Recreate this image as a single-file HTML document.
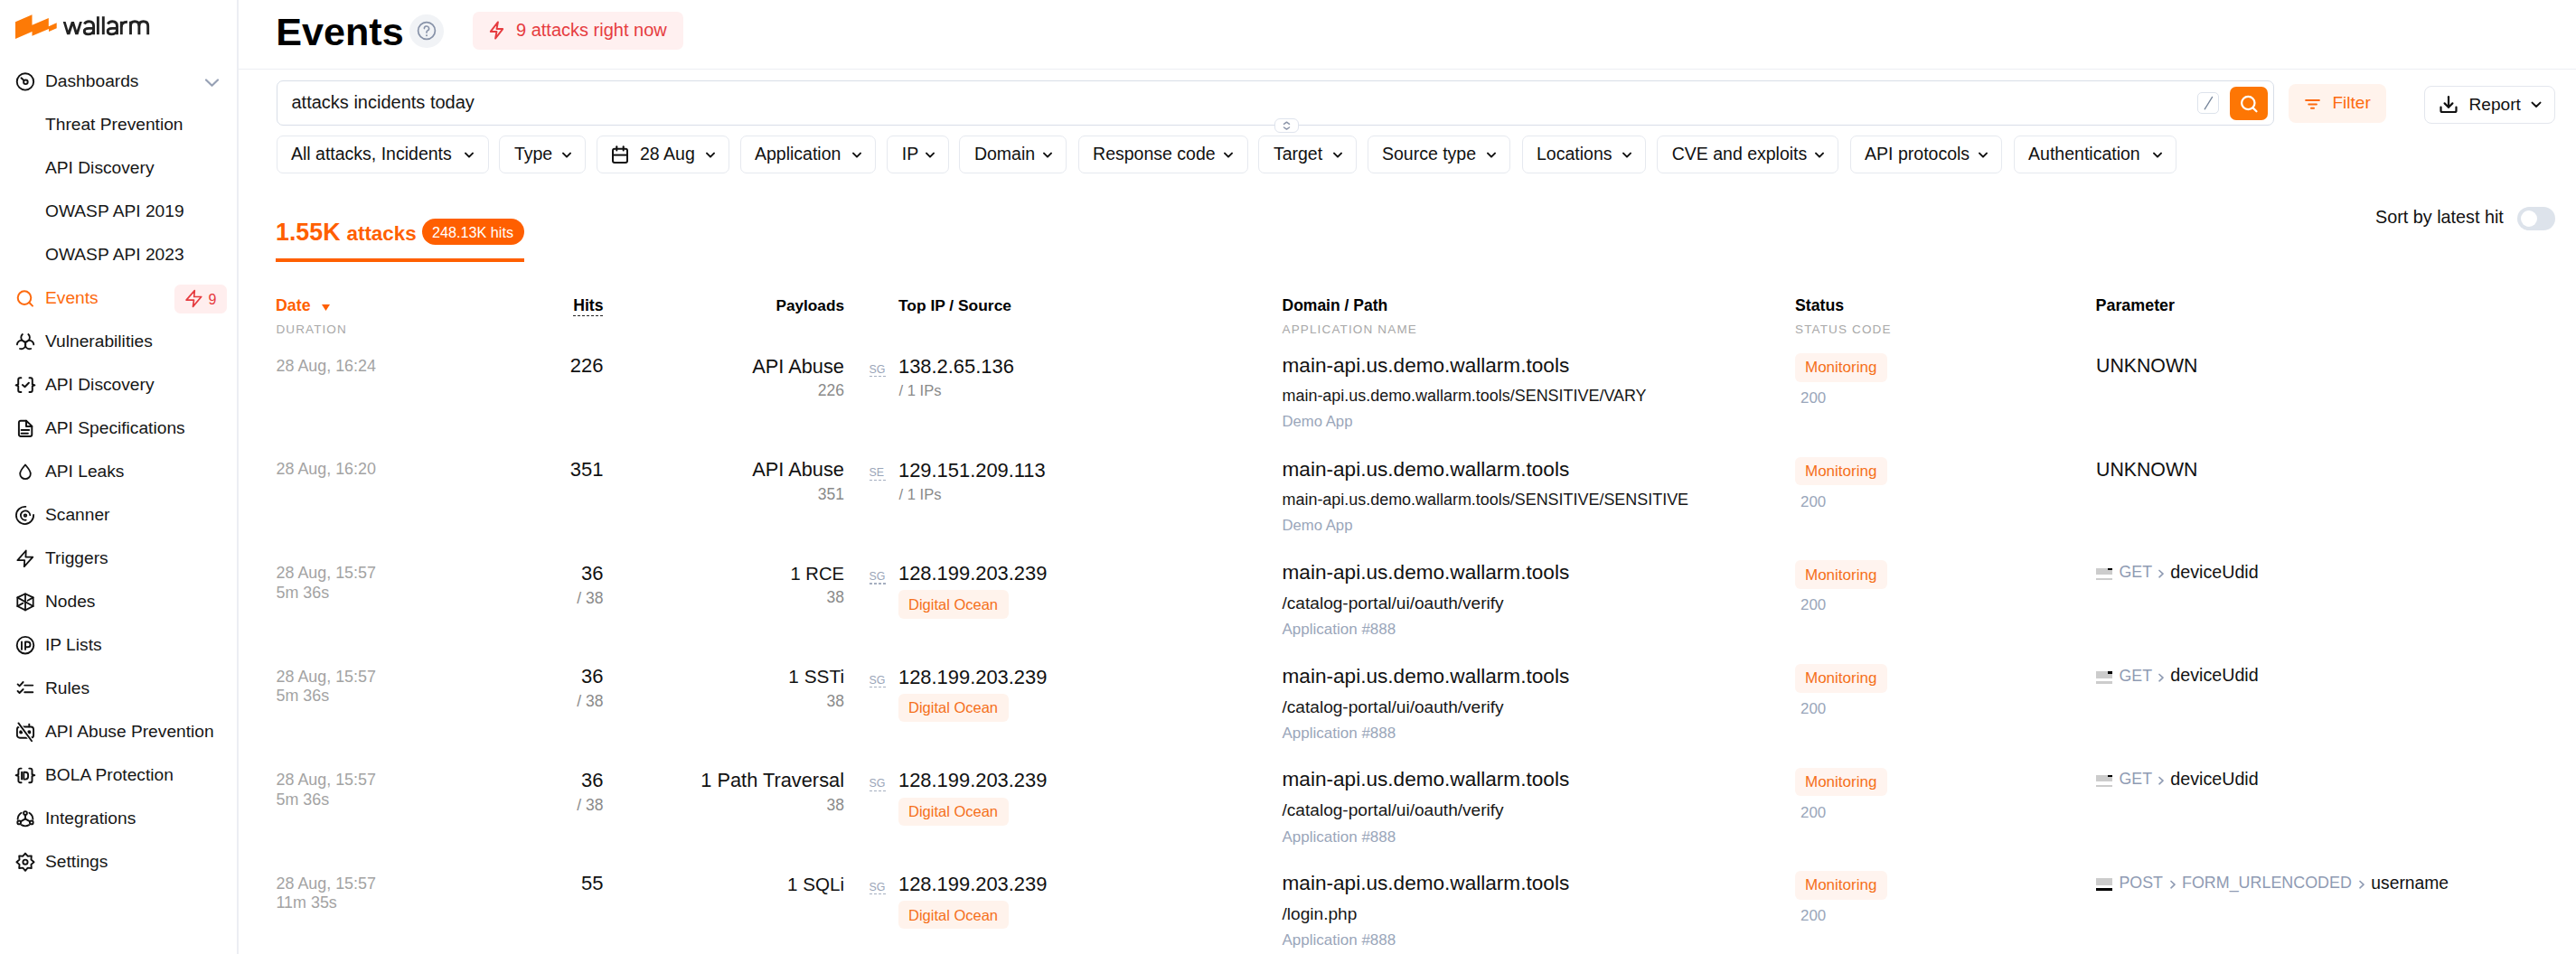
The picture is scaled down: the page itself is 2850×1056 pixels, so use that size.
<!DOCTYPE html>
<html><head><meta charset="utf-8"><title>Events</title>
<style>
html,body{margin:0;padding:0;background:#fff;}
body{width:2850px;height:1056px;position:relative;overflow:hidden;font-family:"Liberation Sans", sans-serif;}
.t{position:absolute;white-space:nowrap;line-height:1;}
.b{position:absolute;}
</style></head><body>
<div class="b" style="left:262.00px;top:0.00px;width:1.50px;height:1056.00px;background:#eceef3"></div>
<svg class="b" style="left:0.00px;top:0.00px;" width="80" height="50" viewBox="0 0 80 50" fill="none"><polygon fill="#fd7a06" points="17,24.3 35.5,16.2 35.5,27.8 53.8,19.9 53.8,29.2 62.7,25.2 62.7,31.2 54,35 54,32 35.5,39.7 35.5,35 17,43.1"/></svg>
<svg class="b" style="left:0.00px;top:0.00px;" width="180" height="50" viewBox="0 0 180 50" fill="none"><g stroke="#222" stroke-width="2.9" fill="none" stroke-linejoin="miter"><polygon fill="#222" stroke="none" points="69.7,24 72.6,24 75.5,33.8 78.9,24 81.9,24 84.9,33.8 88.1,24 90.9,24 86.5,38.2 83.3,38.2 80.4,28.8 77.3,38.2 74.1,38.2"/><path d="M93.40 26.6 C94.40 24.6 96.20 23.7 98.40 23.7 C101.90 23.7 103.60 25.6 103.60 28.8 V38.2"/><path d="M103.60 31.4 H98.20 C95.00 31.4 93.30 32.6 93.30 34.6 C93.30 36.6 95.00 37.9 97.40 37.9 C100.60 37.9 103.60 36 103.60 33"/><path d="M108.4 18.2 V38.2"/><path d="M114.3 18.2 V38.2"/><path d="M119.30 26.6 C120.30 24.6 122.10 23.7 124.30 23.7 C127.80 23.7 129.50 25.6 129.50 28.8 V38.2"/><path d="M129.50 31.4 H124.10 C120.90 31.4 119.20 32.6 119.20 34.6 C119.20 36.6 120.90 37.9 123.30 37.9 C126.50 37.9 129.50 36 129.50 33"/><path d="M134.3 38.2 V23.7"/><path d="M134.3 29.8 C134.3 26 136.6 24.2 140.9 24.2"/><path d="M144.5 38.2 V23.7"/><path d="M144.5 28.6 C144.5 25.4 146.4 23.8 149.1 23.8 C152 23.8 153.9 25.4 153.9 28.6 V38.2"/><path d="M153.9 28.6 C153.9 25.4 155.8 23.8 158.6 23.8 C161.8 23.8 163.7 25.4 163.7 28.8 V38.2"/></g></svg>
<div class="t" style="left:50.00px;top:79.74px;font-size:19.2px;color:#161616;font-weight:400;">Dashboards</div>
<div class="t" style="left:50.00px;top:127.74px;font-size:19.2px;color:#161616;font-weight:400;">Threat Prevention</div>
<div class="t" style="left:50.00px;top:175.74px;font-size:19.2px;color:#161616;font-weight:400;">API Discovery</div>
<div class="t" style="left:50.00px;top:223.74px;font-size:19.2px;color:#161616;font-weight:400;">OWASP API 2019</div>
<div class="t" style="left:50.00px;top:271.74px;font-size:19.2px;color:#161616;font-weight:400;">OWASP API 2023</div>
<div class="t" style="left:50.00px;top:319.74px;font-size:19.2px;color:#fd6a0e;font-weight:400;">Events</div>
<div class="t" style="left:50.00px;top:367.74px;font-size:19.2px;color:#161616;font-weight:400;">Vulnerabilities</div>
<div class="t" style="left:50.00px;top:415.74px;font-size:19.2px;color:#161616;font-weight:400;">API Discovery</div>
<div class="t" style="left:50.00px;top:463.74px;font-size:19.2px;color:#161616;font-weight:400;">API Specifications</div>
<div class="t" style="left:50.00px;top:511.74px;font-size:19.2px;color:#161616;font-weight:400;">API Leaks</div>
<div class="t" style="left:50.00px;top:559.74px;font-size:19.2px;color:#161616;font-weight:400;">Scanner</div>
<div class="t" style="left:50.00px;top:607.74px;font-size:19.2px;color:#161616;font-weight:400;">Triggers</div>
<div class="t" style="left:50.00px;top:655.74px;font-size:19.2px;color:#161616;font-weight:400;">Nodes</div>
<div class="t" style="left:50.00px;top:703.74px;font-size:19.2px;color:#161616;font-weight:400;">IP Lists</div>
<div class="t" style="left:50.00px;top:751.74px;font-size:19.2px;color:#161616;font-weight:400;">Rules</div>
<div class="t" style="left:50.00px;top:799.74px;font-size:19.2px;color:#161616;font-weight:400;">API Abuse Prevention</div>
<div class="t" style="left:50.00px;top:847.74px;font-size:19.2px;color:#161616;font-weight:400;">BOLA Protection</div>
<div class="t" style="left:50.00px;top:895.74px;font-size:19.2px;color:#161616;font-weight:400;">Integrations</div>
<div class="t" style="left:50.00px;top:943.74px;font-size:19.2px;color:#161616;font-weight:400;">Settings</div>
<svg class="b" style="left:14.00px;top:76.00px;" width="28" height="28" viewBox="0 0 28 28" fill="none"><g stroke="#111" stroke-width="1.9" stroke-linecap="round" stroke-linejoin="round"><circle cx="13.95" cy="14.4" r="9.2"/><circle cx="14.4" cy="14.8" r="2.3"/><path d="M9.5 10.3 L12.2 12.8"/></g></svg>
<svg class="b" style="left:226.00px;top:86.00px;" width="17" height="11" viewBox="0 0 17 11" fill="none"><path d="M2 2.5 L8.5 8.8 L15 2.5" stroke="#97a1b5" stroke-width="2.2" stroke-linecap="round" stroke-linejoin="round"/></svg>
<svg class="b" style="left:14.00px;top:316.00px;" width="28" height="28" viewBox="0 0 28 28" fill="none"><g stroke="#fd6a0e" stroke-width="2" stroke-linecap="round" stroke-linejoin="round"><circle cx="13" cy="13.6" r="7.3"/><path d="M18.4 19 L22 22.6"/></g></svg>
<div class="b" style="left:193.00px;top:315.00px;width:58.00px;height:32.00px;background:#ffeeee;border-radius:6.5px"></div>
<svg class="b" style="left:190.00px;top:312.00px;" width="64" height="38" viewBox="0 0 64 38" fill="none"><path d="M25.3 9.6 L16.1 20.1 H24.5 L23.5 27.4 L32.7 16.5 H24.7 Z" stroke="#e63c40" stroke-width="1.7" stroke-linejoin="round" stroke-linecap="round"/></svg>
<div class="t" style="left:230.60px;top:324.25px;font-size:16px;color:#e63c40;font-weight:400;">9</div>
<svg class="b" style="left:14.00px;top:364.00px;" width="28" height="28" viewBox="0 0 28 28" fill="none"><g stroke="#111" stroke-width="1.85" stroke-linecap="round" stroke-linejoin="round"><path d="M10.9 6.0 A4.8 4.8 0 1 0 17.3 6.0"/><path d="M4.9 17.4 A4.7 4.7 0 1 1 8.0 22.0"/><path d="M23.3 17.4 A4.7 4.7 0 1 0 20.2 22.0"/></g></svg>
<svg class="b" style="left:14.00px;top:412.00px;" width="28" height="28" viewBox="0 0 28 28" fill="none"><g stroke="#111" stroke-width="1.95" stroke-linecap="round" stroke-linejoin="round"><path d="M9.4 6.3 H8.2 A2 2 0 0 0 6.2 8.3 V13.4 L3.6 14.4 L6.2 15.4 V19.9 A2 2 0 0 0 8.2 21.9 H9.4"/><path d="M18.5 6.3 H19.8 A2 2 0 0 1 21.8 8.3 V13.4 L24.4 14.4 L21.8 15.4 V19.9 A2 2 0 0 1 19.8 21.9 H18.5"/><path d="M10.9 14.1 L13.5 16.3 L17.9 11.8"/></g></svg>
<svg class="b" style="left:14.00px;top:460.00px;" width="28" height="28" viewBox="0 0 28 28" fill="none"><g stroke="#111" stroke-width="1.95" stroke-linecap="round" stroke-linejoin="round"><path d="M8.9 5.7 H15 L21.3 11.6 V20.9 A2 2 0 0 1 19.3 22.9 H8.9 A2 2 0 0 1 6.9 20.9 V7.7 A2 2 0 0 1 8.9 5.7 Z"/><path d="M15 5.7 V11.9 H21.3"/><path d="M9.6 16 H18.2"/><path d="M9.6 19.8 H16.9"/></g></svg>
<svg class="b" style="left:14.00px;top:508.00px;" width="28" height="28" viewBox="0 0 28 28" fill="none"><g stroke="#111" stroke-width="1.8" stroke-linecap="round" stroke-linejoin="round"><path d="M14 6.5 C11.8 9.2 8.2 12.8 8.2 16.4 A5.8 5.8 0 0 0 19.8 16.4 C19.8 12.8 16.2 9.2 14 6.5 Z"/></g></svg>
<svg class="b" style="left:14.00px;top:556.00px;" width="28" height="28" viewBox="0 0 28 28" fill="none"><g stroke="#111" stroke-width="1.8" stroke-linecap="round" stroke-linejoin="round"><path d="M14.4 4.9 A9.6 9.6 0 1 0 23.1 13.8"/><path d="M19.3 14.2 A5.2 5.2 0 1 0 14.7 19.7"/><circle cx="14" cy="14.6" r="1.3"/></g></svg>
<svg class="b" style="left:14.00px;top:604.00px;" width="28" height="28" viewBox="0 0 28 28" fill="none"><g stroke="#111" stroke-width="1.8" stroke-linecap="round" stroke-linejoin="round"><path d="M14.75 5.5 L5.4 16.2 H13.2 L12.8 23.2 L22.3 12.6 H14.4 Z"/></g></svg>
<svg class="b" style="left:14.00px;top:652.00px;" width="28" height="28" viewBox="0 0 28 28" fill="none"><g stroke="#111" stroke-width="1.8" stroke-linecap="round" stroke-linejoin="round"><path d="M14 5.3 L22.7 9.4 V19 L14 23.4 L5.3 19 V9.4 Z"/><path d="M14 5.3 V23.4"/><path d="M5.3 9.4 L22.7 19"/><path d="M22.7 9.4 L16.6 12.8"/><path d="M11.4 15.6 L5.3 19"/></g></svg>
<svg class="b" style="left:14.00px;top:700.00px;" width="28" height="28" viewBox="0 0 28 28" fill="none"><g stroke="#111" stroke-width="1.9" stroke-linecap="round" stroke-linejoin="round"><circle cx="14" cy="14.2" r="9.3"/><path d="M10 10.5 V18.9"/><path d="M14 18.9 V10.5 H16.6 A2.9 2.9 0 0 1 16.6 16.3 H14"/></g></svg>
<svg class="b" style="left:14.00px;top:748.00px;" width="28" height="28" viewBox="0 0 28 28" fill="none"><g stroke="#111" stroke-width="1.9" stroke-linecap="round" stroke-linejoin="round"><path d="M5.6 9.4 L7.6 11.4 L11.6 7"/><path d="M13.2 10.6 H22.3"/><path d="M5.6 17 L7.6 19 L11.6 15"/><path d="M13.2 18.2 H22.3"/></g></svg>
<svg class="b" style="left:14.00px;top:796.00px;" width="28" height="28" viewBox="0 0 28 28" fill="none"><g stroke="#111" stroke-width="1.9" stroke-linecap="round" stroke-linejoin="round"><rect x="4.9" y="8.5" width="18.2" height="12.2" rx="3"/><path d="M18.3 5.6 V8.4"/><circle cx="9.2" cy="14.4" r="1.1" fill="#111"/><circle cx="18.3" cy="14.4" r="1.1" fill="#111"/><path d="M6.4 4.4 L21.1 24.3" stroke="#fff" stroke-width="4.2"/><path d="M6.4 4.4 L21.1 24.3"/></g></svg>
<svg class="b" style="left:14.00px;top:844.00px;" width="28" height="28" viewBox="0 0 28 28" fill="none"><g stroke="#111" stroke-width="1.95" stroke-linecap="round" stroke-linejoin="round"><path d="M9.6 6.6 H8.4 A2 2 0 0 0 6.4 8.6 V13.2 L3.6 14.2 L6.4 15.2 V20.2 A2 2 0 0 0 8.4 22.2 H9.6"/><path d="M18.3 6.6 H19.5 A2 2 0 0 1 21.5 8.6 V13.2 L24.3 14.2 L21.5 15.2 V20.2 A2 2 0 0 1 19.5 22.2 H18.3"/><path d="M10.1 10.7 V18.6"/><path d="M12.3 10.7 H14.1 A3 3 0 0 1 17.1 13.7 V15.6 A3 3 0 0 1 14.1 18.6 H12.3 Z"/></g></svg>
<svg class="b" style="left:14.00px;top:892.00px;" width="28" height="28" viewBox="0 0 28 28" fill="none"><g stroke="#111" stroke-width="1.9" stroke-linecap="round" stroke-linejoin="round"><circle cx="14" cy="8" r="1.9"/><circle cx="7.2" cy="18.4" r="1.9"/><circle cx="20.8" cy="18.4" r="1.9"/><path d="M14 9.9 V14.4 L8.8 17.4"/><path d="M14 14.4 L19.2 17.4"/><path d="M9.6 7.8 A8.6 8.6 0 0 0 5.6 14.8"/><path d="M18.4 7.8 A8.6 8.6 0 0 1 22.4 14.8"/><path d="M9.8 21.2 A8.6 8.6 0 0 0 18.2 21.2"/></g></svg>
<svg class="b" style="left:14.00px;top:940.00px;" width="28" height="28" viewBox="0 0 28 28" fill="none"><g stroke="#111" stroke-width="1.9" stroke-linecap="round" stroke-linejoin="round"><path d="M14.00,4.60 L16.68,7.73 L20.79,7.41 L20.47,11.52 L23.60,14.20 L20.47,16.88 L20.79,20.99 L16.68,20.67 L14.00,23.80 L11.32,20.67 L7.21,20.99 L7.53,16.88 L4.40,14.20 L7.53,11.52 L7.21,7.41 L11.32,7.73 Z"/><circle cx="14" cy="14.2" r="2.6"/></g></svg>
<div class="t" style="left:305.30px;top:14.21px;font-size:43.1px;color:#000;font-weight:700;">Events</div>
<div class="b" style="left:453px;top:15.6px;width:37.6px;height:37.6px;border-radius:50%;background:#f1f3f6"></div>
<svg class="b" style="left:460.00px;top:22.20px;" width="24" height="24" viewBox="0 0 24 24" fill="none"><circle cx="12" cy="12" r="9.4" stroke="#8792a8" stroke-width="1.7"/><path d="M9.4 9.6 A2.6 2.6 0 1 1 12.9 12 C12.2 12.3 12 12.8 12 13.6 V14.2" stroke="#8792a8" stroke-width="1.6" stroke-linecap="round"/><circle cx="12" cy="17.2" r="1" fill="#8792a8"/></svg>
<div class="b" style="left:523.00px;top:13.00px;width:233.00px;height:42.00px;background:#fff0f0;border-radius:7px"></div>
<svg class="b" style="left:538.00px;top:22.00px;" width="23" height="23" viewBox="0 0 24 24" fill="none"><path d="M13.5 2.5 L5 13.5 H12 L10.5 21.5 L19 10.5 H12 Z" stroke="#e63c40" stroke-width="2" stroke-linejoin="round"/></svg>
<div class="t" style="left:571.00px;top:22.97px;font-size:20px;color:#e63c40;font-weight:400;">9 attacks right now</div>
<div class="b" style="left:263.50px;top:76.00px;width:2586.50px;height:1.00px;background:#eceef3"></div>
<div class="b" style="left:305.50px;top:89.00px;width:2210.50px;height:50.00px;border:1.5px solid #d8dee8;border-radius:7px;box-sizing:border-box"></div>
<div class="t" style="left:322.50px;top:103.37px;font-size:20px;color:#161616;font-weight:400;">attacks incidents today</div>
<div class="b" style="left:2430.60px;top:101.50px;width:24.90px;height:24.70px;border:1.5px solid #dde3ec;border-radius:5px;box-sizing:border-box"></div>
<svg class="b" style="left:2430.00px;top:101.00px;" width="26" height="26" viewBox="0 0 26 26" fill="none"><path d="M9.2 19.8 L17.6 6.4" stroke="#76859a" stroke-width="1.3" stroke-linecap="round"/></svg>
<div class="b" style="left:2467.00px;top:96.00px;width:42.00px;height:37.00px;background:#fd7604;border-radius:7px"></div>
<svg class="b" style="left:2476.00px;top:102.50px;" width="24" height="24" viewBox="0 0 24 24" fill="none"><circle cx="11.3" cy="11" r="7.2" stroke="#fff" stroke-width="2.2"/><path d="M16.6 16.4 L20.5 20.3" stroke="#fff" stroke-width="2.2" stroke-linecap="round"/></svg>
<div class="b" style="left:1410.20px;top:131.40px;width:26.60px;height:15.30px;background:#fff;border:1.2px solid #dfe4ed;border-radius:6px;box-sizing:border-box"></div>
<svg class="b" style="left:1417.00px;top:132.00px;" width="13" height="14" viewBox="0 0 13 14" fill="none"><path d="M3.5 5.3 L6.5 3.2 L9.5 5.3" stroke="#8a94a8" stroke-width="1.5" stroke-linecap="round" stroke-linejoin="round"/><path d="M3.5 9 L6.5 11.1 L9.5 9" stroke="#8a94a8" stroke-width="1.5" stroke-linecap="round" stroke-linejoin="round"/></svg>
<div class="b" style="left:2532.20px;top:93.10px;width:107.50px;height:42.70px;background:#fff3ec;border-radius:8px"></div>
<svg class="b" style="left:2546.00px;top:104.00px;" width="26" height="20" viewBox="0 0 26 20" fill="none"><path d="M5.1 6.9 H19.9" stroke="#fd6a0e" stroke-width="2" stroke-linecap="round"/><path d="M8.3 11.4 H16.9" stroke="#fd6a0e" stroke-width="2" stroke-linecap="round"/><path d="M11 15.8 H14" stroke="#fd6a0e" stroke-width="2" stroke-linecap="round"/></svg>
<div class="t" style="left:2580.50px;top:103.71px;font-size:19px;color:#fd6a0e;font-weight:400;">Filter</div>
<div class="b" style="left:2682.40px;top:95.30px;width:144.20px;height:41.30px;border:1.5px solid #e3e6ed;border-radius:8px;box-sizing:border-box"></div>
<svg class="b" style="left:2697.00px;top:104.00px;" width="24" height="24" viewBox="0 0 24 24" fill="none"><path d="M3.5 14.5 V18.5 A1.5 1.5 0 0 0 5 20 H19 A1.5 1.5 0 0 0 20.5 18.5 V14.5" stroke="#111" stroke-width="2.2" stroke-linecap="round"/><path d="M12 3.2 V14.6" stroke="#111" stroke-width="2.2" stroke-linecap="round"/><path d="M7.6 10.4 L12 14.8 L16.4 10.4" stroke="#111" stroke-width="2.2" stroke-linecap="round" stroke-linejoin="round"/></svg>
<div class="t" style="left:2731.50px;top:105.83px;font-size:19.1px;color:#111;font-weight:400;">Report</div>
<svg class="b" style="left:2799.00px;top:110.00px;" width="14" height="12" viewBox="0 0 14 12" fill="none"><path d="M2.5 3.6 L7 8 L11.5 3.6" stroke="#111" stroke-width="2" stroke-linecap="round" stroke-linejoin="round"/></svg>
<div class="b" style="left:305.50px;top:150.20px;width:235.00px;height:42.00px;border:1.5px solid #e6e9ef;border-radius:7px;box-sizing:border-box"></div>
<div class="t" style="left:322.00px;top:161.49px;font-size:19.5px;color:#111;font-weight:400;">All attacks, Incidents</div>
<svg class="b" style="left:512.00px;top:166.00px;" width="14" height="12" viewBox="0 0 14 12" fill="none"><path d="M3 3.6 L7 7.6 L11 3.6" stroke="#111" stroke-width="2" stroke-linecap="round" stroke-linejoin="round"/></svg>
<div class="b" style="left:552.40px;top:150.20px;width:95.90px;height:42.00px;border:1.5px solid #e6e9ef;border-radius:7px;box-sizing:border-box"></div>
<div class="t" style="left:568.90px;top:161.49px;font-size:19.5px;color:#111;font-weight:400;">Type</div>
<svg class="b" style="left:619.80px;top:166.00px;" width="14" height="12" viewBox="0 0 14 12" fill="none"><path d="M3 3.6 L7 7.6 L11 3.6" stroke="#111" stroke-width="2" stroke-linecap="round" stroke-linejoin="round"/></svg>
<div class="b" style="left:659.60px;top:150.20px;width:147.80px;height:42.00px;border:1.5px solid #e6e9ef;border-radius:7px;box-sizing:border-box"></div>
<svg class="b" style="left:675.00px;top:160.00px;" width="22" height="22" viewBox="0 0 22 22" fill="none"><rect x="3" y="4.8" width="16" height="15.2" rx="2" stroke="#111" stroke-width="2"/><path d="M3 11.6 H19" stroke="#111" stroke-width="2"/><path d="M7.3 2.2 V6.6" stroke="#111" stroke-width="2" stroke-linecap="round"/><path d="M14.7 2.2 V6.6" stroke="#111" stroke-width="2" stroke-linecap="round"/></svg>
<div class="t" style="left:708.00px;top:161.49px;font-size:19.5px;color:#111;font-weight:400;">28 Aug</div>
<svg class="b" style="left:778.90px;top:166.00px;" width="14" height="12" viewBox="0 0 14 12" fill="none"><path d="M3 3.6 L7 7.6 L11 3.6" stroke="#111" stroke-width="2" stroke-linecap="round" stroke-linejoin="round"/></svg>
<div class="b" style="left:818.50px;top:150.20px;width:150.80px;height:42.00px;border:1.5px solid #e6e9ef;border-radius:7px;box-sizing:border-box"></div>
<div class="t" style="left:835.00px;top:161.49px;font-size:19.5px;color:#111;font-weight:400;">Application</div>
<svg class="b" style="left:940.80px;top:166.00px;" width="14" height="12" viewBox="0 0 14 12" fill="none"><path d="M3 3.6 L7 7.6 L11 3.6" stroke="#111" stroke-width="2" stroke-linecap="round" stroke-linejoin="round"/></svg>
<div class="b" style="left:981.30px;top:150.20px;width:68.90px;height:42.00px;border:1.5px solid #e6e9ef;border-radius:7px;box-sizing:border-box"></div>
<div class="t" style="left:997.80px;top:161.49px;font-size:19.5px;color:#111;font-weight:400;">IP</div>
<svg class="b" style="left:1021.70px;top:166.00px;" width="14" height="12" viewBox="0 0 14 12" fill="none"><path d="M3 3.6 L7 7.6 L11 3.6" stroke="#111" stroke-width="2" stroke-linecap="round" stroke-linejoin="round"/></svg>
<div class="b" style="left:1061.40px;top:150.20px;width:119.10px;height:42.00px;border:1.5px solid #e6e9ef;border-radius:7px;box-sizing:border-box"></div>
<div class="t" style="left:1077.90px;top:161.49px;font-size:19.5px;color:#111;font-weight:400;">Domain</div>
<svg class="b" style="left:1152.00px;top:166.00px;" width="14" height="12" viewBox="0 0 14 12" fill="none"><path d="M3 3.6 L7 7.6 L11 3.6" stroke="#111" stroke-width="2" stroke-linecap="round" stroke-linejoin="round"/></svg>
<div class="b" style="left:1192.60px;top:150.20px;width:188.00px;height:42.00px;border:1.5px solid #e6e9ef;border-radius:7px;box-sizing:border-box"></div>
<div class="t" style="left:1209.10px;top:161.49px;font-size:19.5px;color:#111;font-weight:400;">Response code</div>
<svg class="b" style="left:1352.10px;top:166.00px;" width="14" height="12" viewBox="0 0 14 12" fill="none"><path d="M3 3.6 L7 7.6 L11 3.6" stroke="#111" stroke-width="2" stroke-linecap="round" stroke-linejoin="round"/></svg>
<div class="b" style="left:1392.40px;top:150.20px;width:108.80px;height:42.00px;border:1.5px solid #e6e9ef;border-radius:7px;box-sizing:border-box"></div>
<div class="t" style="left:1408.90px;top:161.49px;font-size:19.5px;color:#111;font-weight:400;">Target</div>
<svg class="b" style="left:1472.70px;top:166.00px;" width="14" height="12" viewBox="0 0 14 12" fill="none"><path d="M3 3.6 L7 7.6 L11 3.6" stroke="#111" stroke-width="2" stroke-linecap="round" stroke-linejoin="round"/></svg>
<div class="b" style="left:1512.50px;top:150.20px;width:158.70px;height:42.00px;border:1.5px solid #e6e9ef;border-radius:7px;box-sizing:border-box"></div>
<div class="t" style="left:1529.00px;top:161.49px;font-size:19.5px;color:#111;font-weight:400;">Source type</div>
<svg class="b" style="left:1642.70px;top:166.00px;" width="14" height="12" viewBox="0 0 14 12" fill="none"><path d="M3 3.6 L7 7.6 L11 3.6" stroke="#111" stroke-width="2" stroke-linecap="round" stroke-linejoin="round"/></svg>
<div class="b" style="left:1683.50px;top:150.20px;width:137.90px;height:42.00px;border:1.5px solid #e6e9ef;border-radius:7px;box-sizing:border-box"></div>
<div class="t" style="left:1700.00px;top:161.49px;font-size:19.5px;color:#111;font-weight:400;">Locations</div>
<svg class="b" style="left:1792.90px;top:166.00px;" width="14" height="12" viewBox="0 0 14 12" fill="none"><path d="M3 3.6 L7 7.6 L11 3.6" stroke="#111" stroke-width="2" stroke-linecap="round" stroke-linejoin="round"/></svg>
<div class="b" style="left:1833.20px;top:150.20px;width:201.30px;height:42.00px;border:1.5px solid #e6e9ef;border-radius:7px;box-sizing:border-box"></div>
<div class="t" style="left:1849.70px;top:161.49px;font-size:19.5px;color:#111;font-weight:400;">CVE and exploits</div>
<svg class="b" style="left:2006.00px;top:166.00px;" width="14" height="12" viewBox="0 0 14 12" fill="none"><path d="M3 3.6 L7 7.6 L11 3.6" stroke="#111" stroke-width="2" stroke-linecap="round" stroke-linejoin="round"/></svg>
<div class="b" style="left:2046.60px;top:150.20px;width:168.60px;height:42.00px;border:1.5px solid #e6e9ef;border-radius:7px;box-sizing:border-box"></div>
<div class="t" style="left:2063.10px;top:161.49px;font-size:19.5px;color:#111;font-weight:400;">API protocols</div>
<svg class="b" style="left:2186.70px;top:166.00px;" width="14" height="12" viewBox="0 0 14 12" fill="none"><path d="M3 3.6 L7 7.6 L11 3.6" stroke="#111" stroke-width="2" stroke-linecap="round" stroke-linejoin="round"/></svg>
<div class="b" style="left:2227.60px;top:150.20px;width:180.80px;height:42.00px;border:1.5px solid #e6e9ef;border-radius:7px;box-sizing:border-box"></div>
<div class="t" style="left:2244.10px;top:161.49px;font-size:19.5px;color:#111;font-weight:400;">Authentication</div>
<svg class="b" style="left:2379.90px;top:166.00px;" width="14" height="12" viewBox="0 0 14 12" fill="none"><path d="M3 3.6 L7 7.6 L11 3.6" stroke="#111" stroke-width="2" stroke-linecap="round" stroke-linejoin="round"/></svg>
<div class="t" style="left:305.00px;top:243.91px;font-size:26.8px;color:#ff5f00;font-weight:700;">1.55K</div>
<div class="t" style="left:383.50px;top:247.63px;font-size:22.4px;color:#ff5f00;font-weight:700;">attacks</div>
<div class="b" style="left:467.10px;top:242.20px;width:112.60px;height:28.60px;background:#ff5f00;border-radius:15px"></div>
<div class="t" style="left:478.00px;top:249.08px;font-size:16.2px;color:#fff;font-weight:400;">248.13K hits</div>
<div class="b" style="left:305.00px;top:286.00px;width:275.00px;height:4.00px;background:#ff5f00"></div>
<div class="t" style="left:2628.00px;top:231.04px;font-size:19.8px;color:#111;font-weight:400;">Sort by latest hit</div>
<div class="b" style="left:2785.00px;top:229.00px;width:42.00px;height:26.00px;background:#dde3eb;border-radius:13px"></div>
<div class="b" style="left:2788.8px;top:233px;width:18.2px;height:18.2px;border-radius:50%;background:#fff"></div>
<div class="t" style="left:305.00px;top:329.73px;font-size:17.8px;color:#ff5f00;font-weight:700;">Date</div>
<svg class="b" style="left:355.00px;top:336.00px;" width="11" height="9" viewBox="0 0 11 9" fill="none"><path d="M1 1 H10 L5.5 8 Z" fill="#ff5f00"/></svg>
<div class="t" style="right:2182.50px;top:329.90px;font-size:17.6px;color:#000;font-weight:700;">Hits</div>
<div class="b" style="left:634.00px;top:348.50px;width:33.50px;height:1.50px;background:repeating-linear-gradient(90deg,#222 0 3px,transparent 3px 5px)"></div>
<div class="t" style="right:1916.00px;top:330.24px;font-size:17.2px;color:#000;font-weight:700;">Payloads</div>
<div class="t" style="left:994.00px;top:330.07px;font-size:17.4px;color:#000;font-weight:700;">Top IP / Source</div>
<div class="t" style="left:1418.50px;top:329.98px;font-size:17.5px;color:#000;font-weight:700;">Domain / Path</div>
<div class="t" style="left:1986.00px;top:329.81px;font-size:17.7px;color:#000;font-weight:700;">Status</div>
<div class="t" style="left:2318.50px;top:329.64px;font-size:17.9px;color:#000;font-weight:700;">Parameter</div>
<div class="t" style="left:305.50px;top:357.77px;font-size:13.5px;color:#a8a8a8;font-weight:400;letter-spacing:1.1px;">DURATION</div>
<div class="t" style="left:1418.50px;top:357.77px;font-size:13.5px;color:#a8a8a8;font-weight:400;letter-spacing:1.15px;">APPLICATION NAME</div>
<div class="t" style="left:1986.00px;top:357.77px;font-size:13.5px;color:#a8a8a8;font-weight:400;letter-spacing:1.15px;">STATUS CODE</div>
<div class="t" style="left:305.50px;top:396.84px;font-size:17.9px;color:#a3a3a3;font-weight:400;">28 Aug, 16:24</div>
<div class="t" style="right:2182.50px;top:394.37px;font-size:22px;color:#111;font-weight:400;">226</div>
<div class="t" style="right:1916.00px;top:394.54px;font-size:21.8px;color:#111;font-weight:400;">API Abuse</div>
<div class="t" style="right:1916.00px;top:424.18px;font-size:17.5px;color:#8a8a8a;font-weight:400;">226</div>
<div class="t" style="left:961.50px;top:402.70px;font-size:12.4px;color:#9aa5b8;font-weight:400;">SG</div>
<div class="b" style="left:962.00px;top:416.20px;width:18.00px;height:1.20px;background:repeating-linear-gradient(90deg,#a5afc0 0 3px,transparent 3px 5px)"></div>
<div class="t" style="left:994.00px;top:394.96px;font-size:21.9px;color:#111;font-weight:400;">138.2.65.136</div>
<div class="t" style="left:994.50px;top:425.14px;font-size:16.6px;color:#8a8a8a;font-weight:400;">/ 1 IPs</div>
<div class="t" style="left:1418.50px;top:394.06px;font-size:22.6px;color:#111;font-weight:400;">main-api.us.demo.wallarm.tools</div>
<div class="t" style="left:1418.50px;top:430.00px;font-size:17.95px;color:#161616;font-weight:400;">main-api.us.demo.wallarm.tools/SENSITIVE/VARY</div>
<div class="t" style="left:1418.50px;top:459.46px;font-size:16.7px;color:#9aa6ba;font-weight:400;">Demo App</div>
<div class="b" style="left:1986.00px;top:391.20px;width:102.00px;height:31.50px;background:#fff4ef;border-radius:6px"></div>
<div class="t" style="left:1997.00px;top:398.31px;font-size:17px;color:#f5701a;font-weight:400;">Monitoring</div>
<div class="t" style="left:1992.00px;top:433.19px;font-size:16.9px;color:#9aa6ba;font-weight:400;">200</div>
<div class="t" style="left:2319.00px;top:394.97px;font-size:21.3px;color:#111;font-weight:400;">UNKNOWN</div>
<div class="t" style="left:305.50px;top:511.44px;font-size:17.9px;color:#a3a3a3;font-weight:400;">28 Aug, 16:20</div>
<div class="t" style="right:2182.50px;top:508.97px;font-size:22px;color:#111;font-weight:400;">351</div>
<div class="t" style="right:1916.00px;top:509.14px;font-size:21.8px;color:#111;font-weight:400;">API Abuse</div>
<div class="t" style="right:1916.00px;top:538.78px;font-size:17.5px;color:#8a8a8a;font-weight:400;">351</div>
<div class="t" style="left:961.50px;top:517.30px;font-size:12.4px;color:#9aa5b8;font-weight:400;">SE</div>
<div class="b" style="left:962.00px;top:530.80px;width:18.00px;height:1.20px;background:repeating-linear-gradient(90deg,#a5afc0 0 3px,transparent 3px 5px)"></div>
<div class="t" style="left:994.00px;top:509.56px;font-size:21.9px;color:#111;font-weight:400;">129.151.209.113</div>
<div class="t" style="left:994.50px;top:539.74px;font-size:16.6px;color:#8a8a8a;font-weight:400;">/ 1 IPs</div>
<div class="t" style="left:1418.50px;top:508.66px;font-size:22.6px;color:#111;font-weight:400;">main-api.us.demo.wallarm.tools</div>
<div class="t" style="left:1418.50px;top:544.60px;font-size:17.95px;color:#161616;font-weight:400;">main-api.us.demo.wallarm.tools/SENSITIVE/SENSITIVE</div>
<div class="t" style="left:1418.50px;top:574.06px;font-size:16.7px;color:#9aa6ba;font-weight:400;">Demo App</div>
<div class="b" style="left:1986.00px;top:505.80px;width:102.00px;height:31.50px;background:#fff4ef;border-radius:6px"></div>
<div class="t" style="left:1997.00px;top:512.91px;font-size:17px;color:#f5701a;font-weight:400;">Monitoring</div>
<div class="t" style="left:1992.00px;top:547.79px;font-size:16.9px;color:#9aa6ba;font-weight:400;">200</div>
<div class="t" style="left:2319.00px;top:509.57px;font-size:21.3px;color:#111;font-weight:400;">UNKNOWN</div>
<div class="t" style="left:305.50px;top:626.04px;font-size:17.9px;color:#a3a3a3;font-weight:400;">28 Aug, 15:57</div>
<div class="t" style="left:305.50px;top:647.54px;font-size:17.9px;color:#a3a3a3;font-weight:400;">5m 36s</div>
<div class="t" style="right:2182.50px;top:623.57px;font-size:22px;color:#111;font-weight:400;">36</div>
<div class="t" style="right:2182.50px;top:653.68px;font-size:17.5px;color:#8a8a8a;font-weight:400;">/ 38</div>
<div class="t" style="right:1916.00px;top:625.10px;font-size:20.2px;color:#111;font-weight:400;">1 RCE</div>
<div class="t" style="right:1916.00px;top:653.38px;font-size:17.5px;color:#8a8a8a;font-weight:400;">38</div>
<div class="t" style="left:961.50px;top:631.90px;font-size:12.4px;color:#9aa5b8;font-weight:400;">SG</div>
<div class="b" style="left:962.00px;top:645.40px;width:18.00px;height:1.20px;background:repeating-linear-gradient(90deg,#a5afc0 0 3px,transparent 3px 5px)"></div>
<div class="t" style="left:994.00px;top:624.16px;font-size:21.9px;color:#111;font-weight:400;">128.199.203.239</div>
<div class="b" style="left:994.00px;top:653.30px;width:122.00px;height:31.40px;background:#fff3ec;border-radius:6px"></div>
<div class="t" style="left:1005.00px;top:660.83px;font-size:16.5px;color:#f5701a;font-weight:400;">Digital Ocean</div>
<div class="t" style="left:1418.50px;top:623.26px;font-size:22.6px;color:#111;font-weight:400;">main-api.us.demo.wallarm.tools</div>
<div class="t" style="left:1418.50px;top:658.23px;font-size:19.1px;color:#161616;font-weight:400;">/catalog-portal/ui/oauth/verify</div>
<div class="t" style="left:1418.50px;top:688.41px;font-size:17px;color:#9aa6ba;font-weight:400;">Application #888</div>
<div class="b" style="left:1986.00px;top:620.40px;width:102.00px;height:31.50px;background:#fff4ef;border-radius:6px"></div>
<div class="t" style="left:1997.00px;top:627.51px;font-size:17px;color:#f5701a;font-weight:400;">Monitoring</div>
<div class="t" style="left:1992.00px;top:662.39px;font-size:16.9px;color:#9aa6ba;font-weight:400;">200</div>
<div class="b" style="left:2319.00px;top:628.50px;width:18.00px;height:7.70px;background:#cccccc"></div>
<div class="b" style="left:2332.00px;top:628.50px;width:5.00px;height:2.60px;background:#000"></div>
<div class="b" style="left:2319.00px;top:639.50px;width:18.00px;height:2.70px;background:#cccccc"></div>
<div class="t" style="left:2344.50px;top:625.13px;font-size:17.8px;color:#8f9bb3;font-weight:400;">GET</div>
<svg class="b" style="left:2386.00px;top:629.20px;" width="10" height="12" viewBox="0 0 10 12" fill="none"><path d="M3 2.5 L7 6.2 L3 9.8" stroke="#8f9bb3" stroke-width="1.7" stroke-linecap="round" stroke-linejoin="round"/></svg>
<div class="t" style="left:2401.30px;top:623.52px;font-size:19.7px;color:#111;font-weight:400;">deviceUdid</div>
<div class="t" style="left:305.50px;top:740.64px;font-size:17.9px;color:#a3a3a3;font-weight:400;">28 Aug, 15:57</div>
<div class="t" style="left:305.50px;top:762.14px;font-size:17.9px;color:#a3a3a3;font-weight:400;">5m 36s</div>
<div class="t" style="right:2182.50px;top:738.17px;font-size:22px;color:#111;font-weight:400;">36</div>
<div class="t" style="right:2182.50px;top:768.28px;font-size:17.5px;color:#8a8a8a;font-weight:400;">/ 38</div>
<div class="t" style="right:1916.00px;top:739.19px;font-size:20.8px;color:#111;font-weight:400;">1 SSTi</div>
<div class="t" style="right:1916.00px;top:767.98px;font-size:17.5px;color:#8a8a8a;font-weight:400;">38</div>
<div class="t" style="left:961.50px;top:746.50px;font-size:12.4px;color:#9aa5b8;font-weight:400;">SG</div>
<div class="b" style="left:962.00px;top:760.00px;width:18.00px;height:1.20px;background:repeating-linear-gradient(90deg,#a5afc0 0 3px,transparent 3px 5px)"></div>
<div class="t" style="left:994.00px;top:738.76px;font-size:21.9px;color:#111;font-weight:400;">128.199.203.239</div>
<div class="b" style="left:994.00px;top:767.90px;width:122.00px;height:31.40px;background:#fff3ec;border-radius:6px"></div>
<div class="t" style="left:1005.00px;top:775.43px;font-size:16.5px;color:#f5701a;font-weight:400;">Digital Ocean</div>
<div class="t" style="left:1418.50px;top:737.86px;font-size:22.6px;color:#111;font-weight:400;">main-api.us.demo.wallarm.tools</div>
<div class="t" style="left:1418.50px;top:772.83px;font-size:19.1px;color:#161616;font-weight:400;">/catalog-portal/ui/oauth/verify</div>
<div class="t" style="left:1418.50px;top:803.01px;font-size:17px;color:#9aa6ba;font-weight:400;">Application #888</div>
<div class="b" style="left:1986.00px;top:735.00px;width:102.00px;height:31.50px;background:#fff4ef;border-radius:6px"></div>
<div class="t" style="left:1997.00px;top:742.11px;font-size:17px;color:#f5701a;font-weight:400;">Monitoring</div>
<div class="t" style="left:1992.00px;top:776.99px;font-size:16.9px;color:#9aa6ba;font-weight:400;">200</div>
<div class="b" style="left:2319.00px;top:743.10px;width:18.00px;height:7.70px;background:#cccccc"></div>
<div class="b" style="left:2332.00px;top:743.10px;width:5.00px;height:2.60px;background:#000"></div>
<div class="b" style="left:2319.00px;top:754.10px;width:18.00px;height:2.70px;background:#cccccc"></div>
<div class="t" style="left:2344.50px;top:739.73px;font-size:17.8px;color:#8f9bb3;font-weight:400;">GET</div>
<svg class="b" style="left:2386.00px;top:743.80px;" width="10" height="12" viewBox="0 0 10 12" fill="none"><path d="M3 2.5 L7 6.2 L3 9.8" stroke="#8f9bb3" stroke-width="1.7" stroke-linecap="round" stroke-linejoin="round"/></svg>
<div class="t" style="left:2401.30px;top:738.12px;font-size:19.7px;color:#111;font-weight:400;">deviceUdid</div>
<div class="t" style="left:305.50px;top:855.24px;font-size:17.9px;color:#a3a3a3;font-weight:400;">28 Aug, 15:57</div>
<div class="t" style="left:305.50px;top:876.74px;font-size:17.9px;color:#a3a3a3;font-weight:400;">5m 36s</div>
<div class="t" style="right:2182.50px;top:852.77px;font-size:22px;color:#111;font-weight:400;">36</div>
<div class="t" style="right:2182.50px;top:882.88px;font-size:17.5px;color:#8a8a8a;font-weight:400;">/ 38</div>
<div class="t" style="right:1916.00px;top:852.94px;font-size:21.8px;color:#111;font-weight:400;">1 Path Traversal</div>
<div class="t" style="right:1916.00px;top:882.58px;font-size:17.5px;color:#8a8a8a;font-weight:400;">38</div>
<div class="t" style="left:961.50px;top:861.10px;font-size:12.4px;color:#9aa5b8;font-weight:400;">SG</div>
<div class="b" style="left:962.00px;top:874.60px;width:18.00px;height:1.20px;background:repeating-linear-gradient(90deg,#a5afc0 0 3px,transparent 3px 5px)"></div>
<div class="t" style="left:994.00px;top:853.36px;font-size:21.9px;color:#111;font-weight:400;">128.199.203.239</div>
<div class="b" style="left:994.00px;top:882.50px;width:122.00px;height:31.40px;background:#fff3ec;border-radius:6px"></div>
<div class="t" style="left:1005.00px;top:890.03px;font-size:16.5px;color:#f5701a;font-weight:400;">Digital Ocean</div>
<div class="t" style="left:1418.50px;top:852.46px;font-size:22.6px;color:#111;font-weight:400;">main-api.us.demo.wallarm.tools</div>
<div class="t" style="left:1418.50px;top:887.43px;font-size:19.1px;color:#161616;font-weight:400;">/catalog-portal/ui/oauth/verify</div>
<div class="t" style="left:1418.50px;top:917.61px;font-size:17px;color:#9aa6ba;font-weight:400;">Application #888</div>
<div class="b" style="left:1986.00px;top:849.60px;width:102.00px;height:31.50px;background:#fff4ef;border-radius:6px"></div>
<div class="t" style="left:1997.00px;top:856.71px;font-size:17px;color:#f5701a;font-weight:400;">Monitoring</div>
<div class="t" style="left:1992.00px;top:891.59px;font-size:16.9px;color:#9aa6ba;font-weight:400;">200</div>
<div class="b" style="left:2319.00px;top:857.70px;width:18.00px;height:7.70px;background:#cccccc"></div>
<div class="b" style="left:2332.00px;top:857.70px;width:5.00px;height:2.60px;background:#000"></div>
<div class="b" style="left:2319.00px;top:868.70px;width:18.00px;height:2.70px;background:#cccccc"></div>
<div class="t" style="left:2344.50px;top:854.33px;font-size:17.8px;color:#8f9bb3;font-weight:400;">GET</div>
<svg class="b" style="left:2386.00px;top:858.40px;" width="10" height="12" viewBox="0 0 10 12" fill="none"><path d="M3 2.5 L7 6.2 L3 9.8" stroke="#8f9bb3" stroke-width="1.7" stroke-linecap="round" stroke-linejoin="round"/></svg>
<div class="t" style="left:2401.30px;top:852.72px;font-size:19.7px;color:#111;font-weight:400;">deviceUdid</div>
<div class="t" style="left:305.50px;top:969.84px;font-size:17.9px;color:#a3a3a3;font-weight:400;">28 Aug, 15:57</div>
<div class="t" style="left:305.50px;top:991.34px;font-size:17.9px;color:#a3a3a3;font-weight:400;">11m 35s</div>
<div class="t" style="right:2182.50px;top:967.37px;font-size:22px;color:#111;font-weight:400;">55</div>
<div class="t" style="right:1916.00px;top:968.56px;font-size:20.6px;color:#111;font-weight:400;">1 SQLi</div>
<div class="t" style="left:961.50px;top:975.70px;font-size:12.4px;color:#9aa5b8;font-weight:400;">SG</div>
<div class="b" style="left:962.00px;top:989.20px;width:18.00px;height:1.20px;background:repeating-linear-gradient(90deg,#a5afc0 0 3px,transparent 3px 5px)"></div>
<div class="t" style="left:994.00px;top:967.96px;font-size:21.9px;color:#111;font-weight:400;">128.199.203.239</div>
<div class="b" style="left:994.00px;top:997.10px;width:122.00px;height:31.40px;background:#fff3ec;border-radius:6px"></div>
<div class="t" style="left:1005.00px;top:1004.63px;font-size:16.5px;color:#f5701a;font-weight:400;">Digital Ocean</div>
<div class="t" style="left:1418.50px;top:967.06px;font-size:22.6px;color:#111;font-weight:400;">main-api.us.demo.wallarm.tools</div>
<div class="t" style="left:1418.50px;top:1002.03px;font-size:19.1px;color:#161616;font-weight:400;">/login.php</div>
<div class="t" style="left:1418.50px;top:1032.21px;font-size:17px;color:#9aa6ba;font-weight:400;">Application #888</div>
<div class="b" style="left:1986.00px;top:964.20px;width:102.00px;height:31.50px;background:#fff4ef;border-radius:6px"></div>
<div class="t" style="left:1997.00px;top:971.31px;font-size:17px;color:#f5701a;font-weight:400;">Monitoring</div>
<div class="t" style="left:1992.00px;top:1006.19px;font-size:16.9px;color:#9aa6ba;font-weight:400;">200</div>
<div class="b" style="left:2319.20px;top:972.30px;width:17.80px;height:7.90px;background:#cccccc"></div>
<div class="b" style="left:2319.20px;top:983.20px;width:17.80px;height:2.80px;background:#000"></div>
<div class="t" style="left:2344.50px;top:968.93px;font-size:17.8px;color:#8f9bb3;font-weight:400;">POST</div>
<svg class="b" style="left:2399.00px;top:973.00px;" width="10" height="12" viewBox="0 0 10 12" fill="none"><path d="M3 2.5 L7 6.2 L3 9.8" stroke="#8f9bb3" stroke-width="1.7" stroke-linecap="round" stroke-linejoin="round"/></svg>
<div class="t" style="left:2414.00px;top:968.84px;font-size:17.9px;color:#8f9bb3;font-weight:400;">FORM_URLENCODED</div>
<svg class="b" style="left:2608.00px;top:973.00px;" width="10" height="12" viewBox="0 0 10 12" fill="none"><path d="M3 2.5 L7 6.2 L3 9.8" stroke="#8f9bb3" stroke-width="1.7" stroke-linecap="round" stroke-linejoin="round"/></svg>
<div class="t" style="left:2623.30px;top:967.66px;font-size:19.3px;color:#111;font-weight:400;">username</div>
</body></html>
